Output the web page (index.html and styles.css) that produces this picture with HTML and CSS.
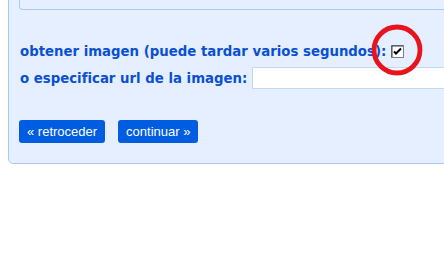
FILE: index.html
```html
<!DOCTYPE html>
<html lang="es">
<head>
<meta charset="utf-8">
<title>obtener imagen</title>
<link rel="stylesheet" href="styles.css">
</head>
<body>
<div class="panel">
  <div class="inner"></div>
  <div class="row row1">
    <label class="lbl">obtener imagen (puede tardar varios segundos):</label>
    <span class="check">
      <svg class="cb" width="13" height="13" viewBox="0 0 13 13">
        <rect x="0.5" y="0.5" width="12" height="12" fill="#fff" stroke="#808080"/>
        <path d="M1 1H12" stroke="#404040"/>
        <path d="M1 1V12" stroke="#404040"/>
        <path d="M3 6.5L5 8.5L10 3.5" fill="none" stroke="#000" stroke-width="2"/>
      </svg>
      <svg class="ring" width="52" height="52" viewBox="0 0 52 52">
        <circle cx="26" cy="26" r="23" fill="none" stroke="#e8141c" stroke-width="4.8"/>
      </svg>
    </span>
  </div>
  <div class="row row2">
    <label class="lbl">o especificar url de la imagen:</label>
    <input class="url" type="text">
  </div>
  <div class="buttons">
    <button class="btn">« retroceder</button>
    <button class="btn">continuar »</button>
  </div>
</div>
</body>
</html>
```
FILE: styles.css
```css
html, body {
  margin: 0;
  padding: 0;
  overflow: hidden;
  background: #fff;
}
body {
  padding-left: 8px;
  width: 600px;
}
.panel {
  margin-top: -50px;
  width: 560px;
  background: #e6efff;
  border: 1px solid #a8c8f8;
  border-radius: 5px;
  padding: 0 0 20px 10px;
}
.inner {
  height: 58px;
  border: 1px solid #a8c8f8;
  border-top: none;
  border-radius: 0 0 4px 4px;
  background: #e6efff;
}
.row {
  display: flex;
  align-items: center;
}
.row1 {
  margin-top: 31px;
  height: 20px;
}
.row2 {
  margin-top: 6px;
  height: 22px;
}
.lbl {
  font-family: "DejaVu Sans", Verdana, sans-serif;
  font-weight: bold;
  font-size: 13.3px;
  color: #0a50d2;
  white-space: nowrap;
  padding-left: 1px;
}
.check {
  position: relative;
  display: inline-block;
  width: 13px;
  height: 13px;
  margin-left: 5px;
}
.cb {
  display: block;
}
.ring {
  position: absolute;
  left: -20px;
  top: -21px;
}
.url {
  margin: 0 0 0 5px;
  width: 300px;
  height: 22px;
  box-sizing: border-box;
  border: 1px solid #c8d8ec;
  background: #fff;
  padding: 0;
}
.buttons {
  margin-top: 31px;
  display: flex;
  gap: 13px;
}
.btn {
  height: 23px;
  padding: 0 8px;
  border: none;
  border-radius: 3px;
  background: #005ce0;
  color: #fff;
  font-family: "Liberation Sans", Arial, sans-serif;
  font-size: 13px;
  line-height: 23px;
}
```
